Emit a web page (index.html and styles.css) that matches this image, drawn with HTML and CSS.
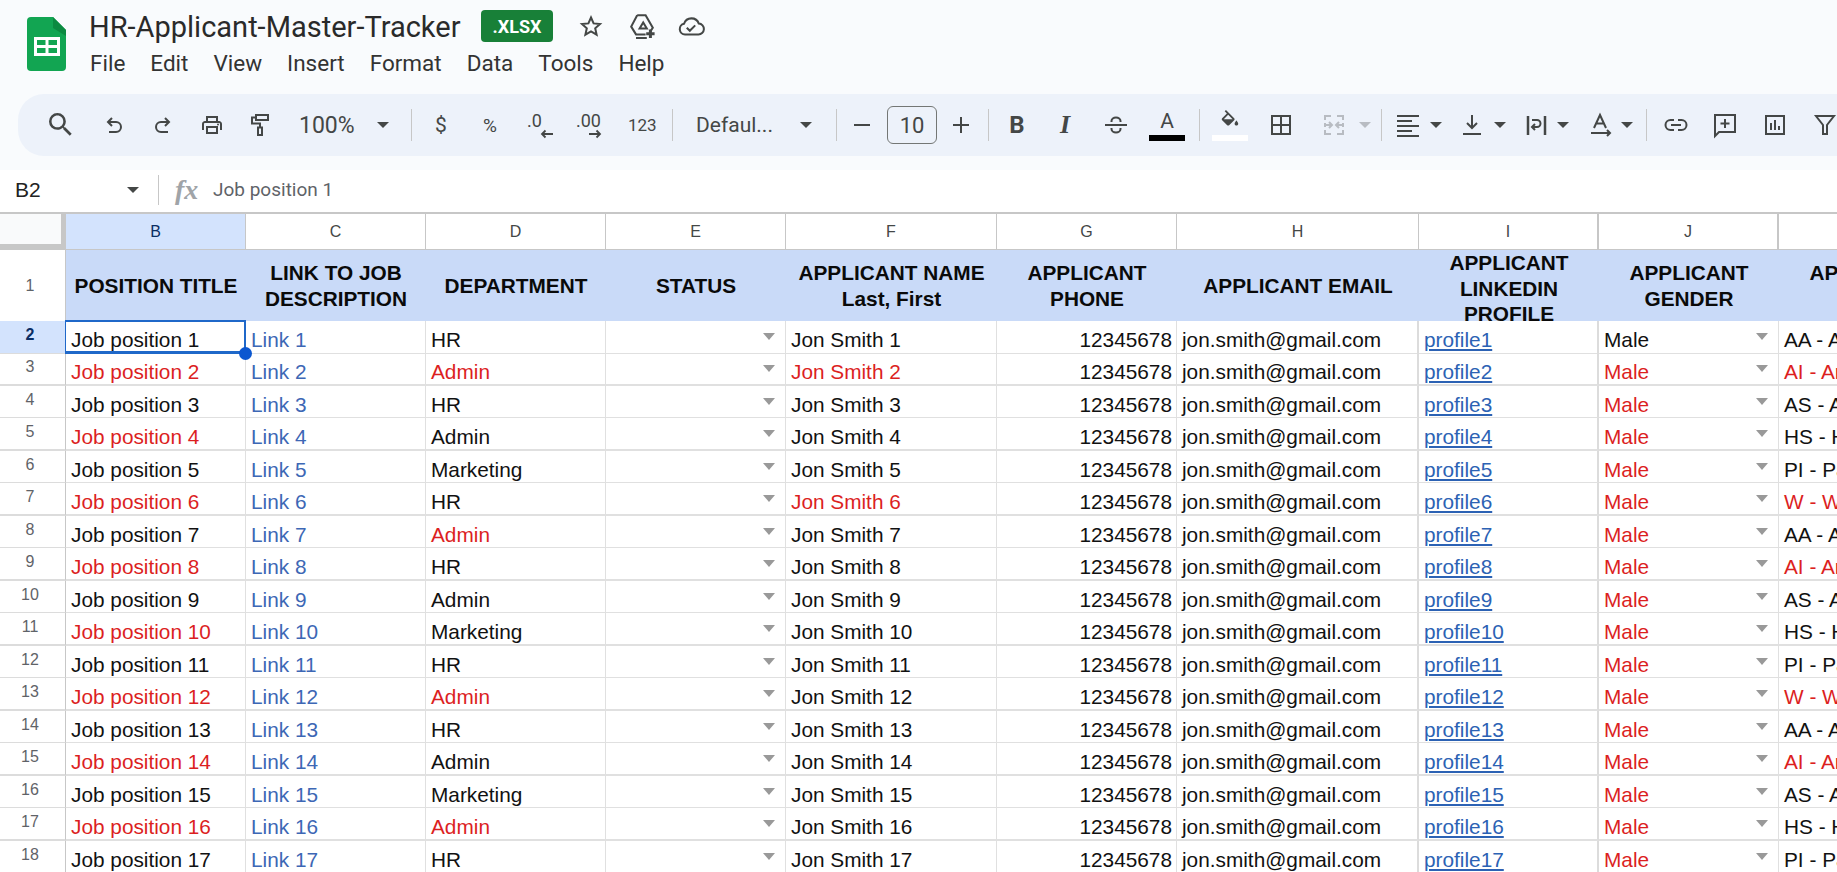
FILE: index.html
```html
<!DOCTYPE html>
<html lang="en">
<head>
<meta charset="utf-8">
<title>HR-Applicant-Master-Tracker</title>
<link rel="stylesheet" href="styles.css">
</head>
<body>
<div class="app">
<header class="top">
  <div class="titlebar">
    <svg class="logo" viewBox="0 0 39 54"><path d="M4 0h22l13 13v37a4 4 0 0 1-4 4H4a4 4 0 0 1-4-4V4a4 4 0 0 1 4-4z" fill="#12a552"/><path d="M26 0l13 13v6L26 11z" fill="#0c8a41"/><path d="M7 20h26v19H7z" fill="#fff"/><path d="M10 23h8.500v5H10zM21.500 23H30v5h-8.500zM10 31h8.500v5H10zM21.500 31H30v5h-8.500z" fill="#12a552"/></svg>
    <div class="titlecol">
      <div class="titlerow">
        <span class="doc">HR-Applicant-Master-Tracker</span>
        <span class="badge">.XLSX</span>
        <svg class="ic star" viewBox="0 0 24 24"><path d="M12 3.500l2.600 5.900 6.400.600-4.800 4.300 1.400 6.300L12 17.300l-5.600 3.300 1.400-6.300L3 10l6.400-.6z"/></svg>
        <svg class="ic drive big" viewBox="2 2 20 20"><path d="M8 3h7l6 10.500-2 3M8 3L3 12.500 7 19h8M10 14l3-5 3 5zM7 22h9"/><path class="thick" d="M19 15v7M15.500 18.500h7"/></svg>
        <svg class="ic cloud big" viewBox="2 2 20 20"><path d="M7 19a4.500 4.500 0 0 1-.8-8.900A6.500 6.500 0 0 1 18.500 10 4.500 4.500 0 0 1 18 19z"/><path d="M8.500 13.500l2.500 2.500 4.500-4.500"/></svg>
      </div>
      <nav class="menu">
        <span>File</span><span>Edit</span><span>View</span><span>Insert</span><span>Format</span><span>Data</span><span>Tools</span><span>Help</span>
      </nav>
    </div>
  </div>
  <div class="toolbar">
    <svg class="ic m31 solid" viewBox="3 3 18.500 18.500"><path d="M15.500 14h-.79l-.28-.27A6.470 6.470 0 0 0 16 9.500 6.500 6.500 0 1 0 9.500 16c1.610 0 3.090-.59 4.230-1.570l.27.28v.79l5 4.990L20.490 19l-4.990-5zm-6 0C7.010 14 5 11.990 5 9.500S7.010 5 9.500 5 14 7.010 14 9.500 11.990 14 9.500 14z"/></svg>
    <svg class="ic m29" viewBox="0 0 24 24"><path d="M10 5L6 9l4 4M6 9h8a5 5 0 0 1 0 10H7"/></svg>
    <svg class="ic m25" viewBox="0 0 24 24"><path d="M14 5l4 4-4 4M18 9h-8a5 5 0 0 0 0 10h7"/></svg>
    <svg class="ic m25 solid" viewBox="0 0 24 24"><path d="M19 8h-1V3H6v5H5c-1.660 0-3 1.340-3 3v6h4v4h12v-4h4v-6c0-1.660-1.340-3-3-3zM8 5h8v3H8V5zm8 14H8v-4h8v4zm2-2v-4H6v4H4v-6c0-.55.45-1 1-1h14c.55 0 1 .45 1 1v6h-2z"/><circle cx="18" cy="11.500" r="1"/></svg>
    <svg class="ic m24" viewBox="0 0 24 24"><path d="M8 2h12v5H8zM8 4.500H4v6h8v4M10 14.500h4V22h-4z"/></svg>
    <span class="tx zoom m27">100%</span>
    <svg class="caret m20" viewBox="0 0 12 6"><path d="M0 0h12L6 6z"/></svg>
    <i class="sep m22"></i>
    <span class="tx sym dollar m17">$</span>
    <span class="tx sym pct m25">%</span>
    <svg class="ic m21 dec" viewBox="0 0 24 24"><text x="4" y="14">.0</text><path d="M30 21H19M22.500 17.500L19 21l3.500 3.500"/></svg>
    <svg class="ic m31 dec" viewBox="0 0 24 24"><text x="-2" y="14">.00</text><path d="M11 21h11M18.500 17.500L22 21l-3.500 3.500"/></svg>
    <span class="tx sym num123 m26">123</span>
    <i class="sep m20"></i>
    <span class="tx font m23">Defaul...</span>
    <svg class="caret m3" viewBox="0 0 12 6"><path d="M0 0h12L6 6z"/></svg>
    <i class="sep m24"></i>
    <svg class="ic m13" viewBox="0 0 24 24"><path d="M4 12h16"/></svg>
    <span class="tx size m13">10</span>
    <svg class="ic m12" viewBox="0 0 24 24"><path d="M4 12h16M12 4v16"/></svg>
    <i class="sep m15"></i>
    <span class="tx bold m16">B</span>
    <span class="tx ital m24">I</span>
    <svg class="ic m27" viewBox="0 0 24 24"><path d="M1 12h22M7.500 9V8a4.500 3.500 0 0 1 9 0v1M7.500 15v1a4.500 3.500 0 0 0 9 0v-1"/></svg>
    <span class="colorbox m21"><span class="tx acolor">A</span><i class="bar black"></i></span>
    <i class="sep m14"></i>
    <span class="colorbox m12"><svg class="ic solid" viewBox="0 0 24 24"><path d="M16.560 8.940L7.620 0 6.210 1.410l2.380 2.380-5.150 5.150c-.59.59-.59 1.540 0 2.120l5.500 5.500c.29.290.68.440 1.060.440s.770-.150 1.060-.440l5.500-5.500c.59-.58.59-1.530 0-2.120zM5.210 10L10 5.210 14.790 10H5.210zM19 11.500s-2 2.170-2 3.500c0 1.100.9 2 2 2s2-.9 2-2c0-1.330-2-3.500-2-3.500z"/></svg><i class="bar white"></i></span>
    <svg class="ic m21" viewBox="0 0 24 24"><path d="M3 3h18v18H3zM12 3v18M3 12h18"/></svg>
    <svg class="ic m29 dim" viewBox="0 0 24 24"><path d="M3 7V3h6M15 3h6v4M3 10v4M21 10v4M3 17v4h6M15 21h6v-4M3 12h6M7 9l3 3-3 3M21 12h-6M17 9l-3 3 3 3"/></svg>
    <svg class="caret dimc m13" viewBox="0 0 12 6"><path d="M0 0h12L6 6z"/></svg>
    <i class="sep m10"></i>
    <svg class="ic m14" viewBox="0 0 24 24"><path d="M1 3h22M1 8h15M1 13h22M1 18h15M1 23h22"/></svg>
    <svg class="caret m10" viewBox="0 0 12 6"><path d="M0 0h12L6 6z"/></svg>
    <svg class="ic m18" viewBox="0 0 24 24"><path d="M12 2v13M7 10l5 5 5-5M3 21h18"/></svg>
    <svg class="caret m10" viewBox="0 0 12 6"><path d="M0 0h12L6 6z"/></svg>
    <svg class="ic m18" viewBox="0 0 24 24"><path class="thick" d="M4 3v19M21 3v19"/><path d="M8 7h5a3.500 3.500 0 0 1 0 7H9M11 11l-3 3 3 3"/></svg>
    <svg class="caret m9" viewBox="0 0 12 6"><path d="M0 0h12L6 6z"/></svg>
    <svg class="ic m19" viewBox="0 0 24 24"><path d="M6 15l6-13 6 13M8 10.500h8M3 20h18M19 17l3 3-3 3"/></svg>
    <svg class="caret m9" viewBox="0 0 12 6"><path d="M0 0h12L6 6z"/></svg>
    <i class="sep m13"></i>
    <svg class="ic m17" viewBox="0 0 24 24"><path d="M10 7H6.500a5 5 0 0 0 0 10H10M14 7h3.500a5 5 0 0 1 0 10H14M7 12h10"/></svg>
    <svg class="ic m25" viewBox="0 0 24 24"><path d="M2 2h20v17H6l-4 4zM12 6v9M7.500 10.500h9"/></svg>
    <svg class="ic m26" viewBox="0 0 24 24"><path d="M3 3h18v18H3zM8 10v7M12 7v10M16 13v4"/></svg>
    <svg class="ic m26" viewBox="0 0 24 24"><path d="M3 3h18l-7 9v9h-4v-9z"/></svg>
  </div>
</header>
<div class="formula">
  <span class="namebox">B2</span>
  <svg class="caret fcaret" viewBox="0 0 12 6"><path d="M0 0h12L6 6z"/></svg>
  <i class="sep fsep"></i>
  <span class="fx">fx</span>
  <span class="ftext">Job position 1</span>
</div>
<div class="sheet">
  <div class="row colhead">
    <div class="corner"></div><div class="ch active">B</div><div class="ch">C</div><div class="ch">D</div><div class="ch">E</div><div class="ch">F</div><div class="ch">G</div><div class="ch">H</div><div class="ch wide">I</div><div class="ch wide">J</div><div class="ch">K</div>
  </div>
  <div class="row headrow">
    <div class="rn">1</div><div class="hd">POSITION TITLE</div><div class="hd">LINK TO JOB DESCRIPTION</div><div class="hd">DEPARTMENT</div><div class="hd">STATUS</div><div class="hd">APPLICANT NAME<br>Last, First</div><div class="hd">APPLICANT PHONE</div><div class="hd">APPLICANT EMAIL</div><div class="hd tall">APPLICANT LINKEDIN PROFILE</div><div class="hd">APPLICANT GENDER</div><div class="hd">APPLICANT<br>RACE</div>
  </div>
  <div class="row"><div class="rn cur">2</div><div class="c sel">Job position 1</div><div class="c lnk">Link 1</div><div class="c">HR</div><div class="c dd"></div><div class="c">Jon Smith 1</div><div class="c num">12345678</div><div class="c">jon.smith@gmail.com</div><div class="c pf"><a>profile1</a></div><div class="c dd">Male</div><div class="c">AA - Asian</div></div>
  <div class="row"><div class="rn">3</div><div class="c red">Job position 2</div><div class="c lnk">Link 2</div><div class="c red">Admin</div><div class="c dd"></div><div class="c red">Jon Smith 2</div><div class="c num">12345678</div><div class="c">jon.smith@gmail.com</div><div class="c pf"><a>profile2</a></div><div class="c dd red">Male</div><div class="c red">AI - American</div></div>
  <div class="row"><div class="rn">4</div><div class="c">Job position 3</div><div class="c lnk">Link 3</div><div class="c">HR</div><div class="c dd"></div><div class="c">Jon Smith 3</div><div class="c num">12345678</div><div class="c">jon.smith@gmail.com</div><div class="c pf"><a>profile3</a></div><div class="c dd red">Male</div><div class="c">AS - Asian</div></div>
  <div class="row"><div class="rn">5</div><div class="c red">Job position 4</div><div class="c lnk">Link 4</div><div class="c">Admin</div><div class="c dd"></div><div class="c">Jon Smith 4</div><div class="c num">12345678</div><div class="c">jon.smith@gmail.com</div><div class="c pf"><a>profile4</a></div><div class="c dd red">Male</div><div class="c">HS - Hispanic</div></div>
  <div class="row"><div class="rn">6</div><div class="c">Job position 5</div><div class="c lnk">Link 5</div><div class="c">Marketing</div><div class="c dd"></div><div class="c">Jon Smith 5</div><div class="c num">12345678</div><div class="c">jon.smith@gmail.com</div><div class="c pf"><a>profile5</a></div><div class="c dd red">Male</div><div class="c">PI - Pacific</div></div>
  <div class="row"><div class="rn">7</div><div class="c red">Job position 6</div><div class="c lnk">Link 6</div><div class="c">HR</div><div class="c dd"></div><div class="c red">Jon Smith 6</div><div class="c num">12345678</div><div class="c">jon.smith@gmail.com</div><div class="c pf"><a>profile6</a></div><div class="c dd red">Male</div><div class="c red">W - White</div></div>
  <div class="row"><div class="rn">8</div><div class="c">Job position 7</div><div class="c lnk">Link 7</div><div class="c red">Admin</div><div class="c dd"></div><div class="c">Jon Smith 7</div><div class="c num">12345678</div><div class="c">jon.smith@gmail.com</div><div class="c pf"><a>profile7</a></div><div class="c dd red">Male</div><div class="c">AA - Asian</div></div>
  <div class="row"><div class="rn">9</div><div class="c red">Job position 8</div><div class="c lnk">Link 8</div><div class="c">HR</div><div class="c dd"></div><div class="c">Jon Smith 8</div><div class="c num">12345678</div><div class="c">jon.smith@gmail.com</div><div class="c pf"><a>profile8</a></div><div class="c dd red">Male</div><div class="c red">AI - American</div></div>
  <div class="row"><div class="rn">10</div><div class="c">Job position 9</div><div class="c lnk">Link 9</div><div class="c">Admin</div><div class="c dd"></div><div class="c">Jon Smith 9</div><div class="c num">12345678</div><div class="c">jon.smith@gmail.com</div><div class="c pf"><a>profile9</a></div><div class="c dd red">Male</div><div class="c">AS - Asian</div></div>
  <div class="row"><div class="rn">11</div><div class="c red">Job position 10</div><div class="c lnk">Link 10</div><div class="c">Marketing</div><div class="c dd"></div><div class="c">Jon Smith 10</div><div class="c num">12345678</div><div class="c">jon.smith@gmail.com</div><div class="c pf"><a>profile10</a></div><div class="c dd red">Male</div><div class="c">HS - Hispanic</div></div>
  <div class="row"><div class="rn">12</div><div class="c">Job position 11</div><div class="c lnk">Link 11</div><div class="c">HR</div><div class="c dd"></div><div class="c">Jon Smith 11</div><div class="c num">12345678</div><div class="c">jon.smith@gmail.com</div><div class="c pf"><a>profile11</a></div><div class="c dd red">Male</div><div class="c">PI - Pacific</div></div>
  <div class="row"><div class="rn">13</div><div class="c red">Job position 12</div><div class="c lnk">Link 12</div><div class="c red">Admin</div><div class="c dd"></div><div class="c">Jon Smith 12</div><div class="c num">12345678</div><div class="c">jon.smith@gmail.com</div><div class="c pf"><a>profile12</a></div><div class="c dd red">Male</div><div class="c red">W - White</div></div>
  <div class="row"><div class="rn">14</div><div class="c">Job position 13</div><div class="c lnk">Link 13</div><div class="c">HR</div><div class="c dd"></div><div class="c">Jon Smith 13</div><div class="c num">12345678</div><div class="c">jon.smith@gmail.com</div><div class="c pf"><a>profile13</a></div><div class="c dd red">Male</div><div class="c">AA - Asian</div></div>
  <div class="row"><div class="rn">15</div><div class="c red">Job position 14</div><div class="c lnk">Link 14</div><div class="c">Admin</div><div class="c dd"></div><div class="c">Jon Smith 14</div><div class="c num">12345678</div><div class="c">jon.smith@gmail.com</div><div class="c pf"><a>profile14</a></div><div class="c dd red">Male</div><div class="c red">AI - American</div></div>
  <div class="row"><div class="rn">16</div><div class="c">Job position 15</div><div class="c lnk">Link 15</div><div class="c">Marketing</div><div class="c dd"></div><div class="c">Jon Smith 15</div><div class="c num">12345678</div><div class="c">jon.smith@gmail.com</div><div class="c pf"><a>profile15</a></div><div class="c dd red">Male</div><div class="c">AS - Asian</div></div>
  <div class="row"><div class="rn">17</div><div class="c red">Job position 16</div><div class="c lnk">Link 16</div><div class="c red">Admin</div><div class="c dd"></div><div class="c">Jon Smith 16</div><div class="c num">12345678</div><div class="c">jon.smith@gmail.com</div><div class="c pf"><a>profile16</a></div><div class="c dd red">Male</div><div class="c">HS - Hispanic</div></div>
  <div class="row"><div class="rn">18</div><div class="c">Job position 17</div><div class="c lnk">Link 17</div><div class="c">HR</div><div class="c dd"></div><div class="c">Jon Smith 17</div><div class="c num">12345678</div><div class="c">jon.smith@gmail.com</div><div class="c pf"><a>profile17</a></div><div class="c dd red">Male</div><div class="c">PI - Pacific</div></div>
</div>
</div>
</body>
</html>
```
FILE: styles.css
```css
* { box-sizing: border-box; }
html, body { margin: 0; height: 100%; overflow: hidden; background: #fff; }
.app { width: 1837px; height: 872px; overflow: hidden; display: flex; flex-direction: column; font-family: "Liberation Sans", Arial, sans-serif; }

/* top chrome */
.top { height: 170px; flex: none; background: #f9fbfd; padding-top: 10px; }
.titlebar { display: flex; height: 84px; }
.logo { width: 39px; height: 54px; margin: 7px 0 0 27px; flex: none; }
.titlecol { margin-left: 23px; font-family: Roboto, "Liberation Sans", sans-serif; }
.titlerow { display: flex; align-items: center; height: 32px; }
.doc { font-size: 29px; color: #2a2a2a; width: 371px; white-space: nowrap; padding-top: 2px; }
.badge { margin-left: 21px; width: 72px; height: 32px; border-radius: 4px; background: #188038; color: #fff; font-size: 18px; font-weight: 700; display: flex; align-items: center; justify-content: center; }
.star { margin-left: 26px; }
.drive { margin-left: 27px; }
.cloud { margin-left: 25px; }
.menu { display: flex; gap: 25px; margin-top: 5px; font-size: 22.500px; color: #333; line-height: 32px; margin-left: 1px; }

.ic { width: 24px; height: 24px; flex: none; fill: none; stroke: #444746; stroke-width: 2; overflow: visible; }
.ic.big { stroke-width: 1.700; }
.ic.solid { fill: #444746; stroke: none; }
.ic .thick { stroke-width: 2.500; }
.ic.dim { stroke: #b8bcc2; }
.dec { stroke-width: 1.800; }
.dec text { font-family: Roboto, sans-serif; font-size: 18px; fill: #444746; stroke: none; }
.toolbar { margin-left: 18px; width: 1900px; height: 62px; background: #edf2fa; border-radius: 26px; display: flex; align-items: center; }
.caret { width: 12px; height: 6px; flex: none; fill: #444746; }
.caret.dimc { fill: #b8bcc2; }
.sep { display: block; width: 1px; height: 32px; background: #c7c7c7; flex: none; }
.tx { font-family: Roboto, sans-serif; color: #444746; flex: none; }
.zoom { width: 58px; font-size: 23px; }
.sym { width: 24px; text-align: center; font-size: 19px; }
.dollar { font-size: 21px; }
.num123 { font-size: 17px; white-space: nowrap; }
.font { width: 101px; font-size: 21px; white-space: nowrap; }
.size { width: 50px; height: 38px; border: 1px solid #747775; border-radius: 6px; font-size: 22px; display: flex; align-items: center; justify-content: center; }
.bold { width: 24px; text-align: center; font-size: 24px; font-weight: 700; }
.ital { width: 24px; text-align: center; font-family: "Liberation Serif", serif; font-weight: 700; font-style: italic; font-size: 26px; }
.colorbox { width: 36px; height: 38px; padding-bottom: 3px; display: flex; flex-direction: column; align-items: center; justify-content: flex-end; flex: none; }
.acolor { font-size: 21px; line-height: 22px; font-weight: 400; }
.bar { display: block; width: 36px; height: 6px; margin-top: 3px; flex: none; }
.bar.black { background: #000; }
.bar.white { background: #fff; }
.colorbox .ic { height: 22px; width: 22px; margin-bottom: 0; }

.m3 { margin-left: 3px; } .m9 { margin-left: 9px; } .m10 { margin-left: 10px; } .m12 { margin-left: 12px; } .m13 { margin-left: 13px; }
.m14 { margin-left: 14px; } .m15 { margin-left: 15px; } .m16 { margin-left: 16px; } .m17 { margin-left: 17px; } .m18 { margin-left: 18px; }
.m19 { margin-left: 19px; } .m20 { margin-left: 20px; } .m21 { margin-left: 21px; } .m22 { margin-left: 22px; } .m23 { margin-left: 23px; }
.m24 { margin-left: 24px; } .m25 { margin-left: 25px; } .m26 { margin-left: 26px; } .m27 { margin-left: 27px; } .m29 { margin-left: 29px; } .m31 { margin-left: 31px; }

/* formula bar */
.formula { height: 42px; flex: none; background: #fff; display: flex; align-items: center; padding: 0 0 3px 15px; }
.namebox { width: 112px; font-size: 21px; color: #222; }
.fcaret { margin-left: 0; }
.fsep { margin-left: 19px; height: 30px; }
.fx { margin-left: 16px; width: 38px; font-family: "Liberation Serif", serif; font-style: italic; font-weight: 700; font-size: 28px; color: #a0a4a8; }
.ftext { font-family: Roboto, sans-serif; font-size: 19px; color: #5f6368; }

/* sheet */
.sheet { flex: 1; min-height: 0; overflow: hidden; border-top: 2px solid #c7c7c7; }
.row { display: grid; grid-template-columns: 66px 180px 180px 180px 180px 211px 180px 242px 180px 180px 180px; height: 32px; font-size: 20.800px; color: #111; }
.row:nth-child(even) { height: 33px; }
.row.colhead { height: 36px; font-size: 16px; }
.row.headrow { height: 71px; }
.corner { background: #f9fafb; border-right: 5px solid #c7c7c7; border-bottom: 6px solid #c7c7c7; box-shadow: 1px 0 0 #fff; }
.ch { display: flex; align-items: center; justify-content: center; color: #444746; border-right: 1px solid #c7c7c7; border-bottom: 1px solid #c7c7c7; }
.ch.active { background: #d3e3fd; color: #0b2e63; }
.ch.wide { border-right-width: 2px; }
.rn { display: flex; justify-content: center; padding: 3px 5px 0 0; font-size: 16px; color: #5f6368; border-right: 1px solid #c7c7c7; border-bottom: 1px solid #dcdcdc; line-height: 22px; }
.row:nth-child(even) .rn { border-bottom-width: 2px; }
.headrow .rn { align-items: center; padding-top: 0; border-bottom: 0; }
.rn.cur { background: #d3e3fd; color: #0b2e63; font-weight: 700; }
.hd { background: #c9daf8; display: flex; align-items: center; justify-content: center; text-align: center; font-weight: 700; line-height: 25.500px; color: #0a0a0a; padding: 0 3px; }
.hd.tall { align-items: flex-start; overflow: hidden; padding: 0 20px; }
.c { position: relative; padding: 6px 5px 0; white-space: nowrap; overflow: hidden; line-height: 26px; border-right: 1px solid #e0e0e0; border-bottom: 1px solid #e0e0e0; }
.row:nth-child(even) .c { border-bottom-width: 2px; }
.c:nth-child(8), .c:nth-child(9) { border-right-width: 2px; border-right-color: #dcdcdc; }
.red { color: #dc1f1f; }
.lnk { color: #3d67b5; }
.c.num { text-align: right; padding-right: 4px; }
.pf a { color: #2c62b4; text-decoration: underline; }
.dd::after { content: ""; position: absolute; right: 10px; top: 12px; border-left: 6px solid transparent; border-right: 6px solid transparent; border-top: 7px solid #999; }
.c.sel { overflow: visible; z-index: 2; }
.c.sel::before { content: ""; position: absolute; left: -1px; right: -1px; top: -1px; bottom: -1px; border: solid #1f68c9; border-width: 2px 2px 3px 1px; }
.c.sel::after { content: ""; position: absolute; right: -7px; bottom: -7px; width: 13px; height: 13px; border-radius: 50%; background: #0b57d0; }
```
